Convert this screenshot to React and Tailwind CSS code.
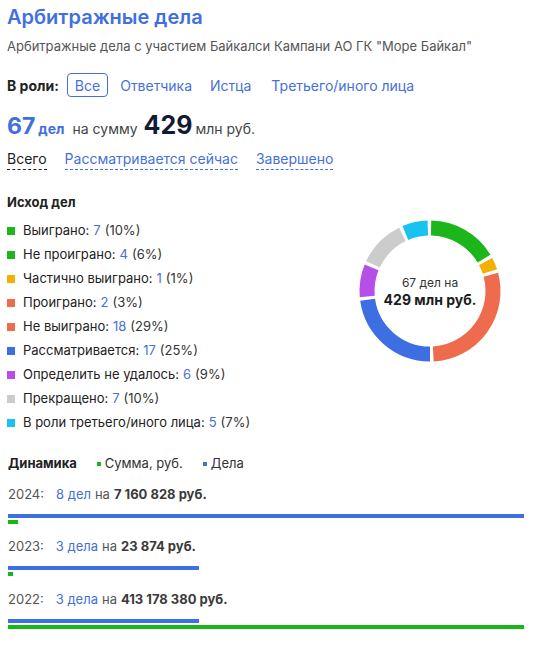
import React from 'react';

const legend = [
  { label: 'Выиграно', n: 7, p: '10%', color: 'bg-[#1cb51c]' },
  { label: 'Не проиграно', n: 4, p: '6%', color: 'bg-[#1cb51c]' },
  { label: 'Частично выиграно', n: 1, p: '1%', color: 'bg-[#f4b000]' },
  { label: 'Проиграно', n: 2, p: '3%', color: 'bg-[#ee6b4d]' },
  { label: 'Не выиграно', n: 18, p: '29%', color: 'bg-[#ee6b4d]' },
  { label: 'Рассматривается', n: 17, p: '25%', color: 'bg-[#3d6fe3]' },
  { label: 'Определить не удалось', n: 6, p: '9%', color: 'bg-[#b64fe8]' },
  { label: 'Прекращено', n: 7, p: '10%', color: 'bg-[#cccccc]' },
  { label: 'В роли третьего/иного лица', n: 5, p: '7%', color: 'bg-[#19c3ef]' },
];

const arcs = [
  { from: 1, to: 59, color: '#1cb51c' },
  { from: 62, to: 72, color: '#f4b000' },
  { from: 75, to: 177, color: '#ee6b4d' },
  { from: 180, to: 262, color: '#3d6fe3' },
  { from: 265, to: 292, color: '#b64fe8' },
  { from: 295, to: 334, color: '#cccccc' },
  { from: 337, to: 358, color: '#19c3ef' },
];

const pt = (cx, cy, r, deg) => {
  const a = ((deg - 90) * Math.PI) / 180;
  return [cx + r * Math.cos(a), cy + r * Math.sin(a)];
};

const arcPath = (from, to) => {
  const [x1, y1] = pt(75, 75, 63, from);
  const [x2, y2] = pt(75, 75, 63, to);
  const large = to - from > 180 ? 1 : 0;
  return `M ${x1} ${y1} A 63 63 0 ${large} 1 ${x2} ${y2}`;
};

const Donut = () => (
  <div className="relative mt-[24px] mr-[25px] h-[150px] w-[150px]">
    <svg width="150" height="150" viewBox="0 0 150 150">
      {arcs.map((a, i) => (
        <path key={i} d={arcPath(a.from, a.to)} fill="none" stroke={a.color} strokeWidth="15" />
      ))}
    </svg>
    <div className="absolute inset-0 flex flex-col items-center justify-center pt-[2px]">
      <div className="text-[12px] leading-[16px] text-[#333]">67 дел на</div>
      <div className="text-[14px] leading-[18px] font-bold text-[#1d1d1d]">429 млн руб.</div>
    </div>
  </div>
);

const YearRow = ({ year, cases, sum, blue, green, mt }) => (
  <div className={mt}>
    <div className="flex h-[20px] items-center text-[13px] text-[#555]">
      <span>{year}:</span>
      <span className="ml-[12px] text-[#4670d8]">{cases}</span>
      <span className="ml-[4px]">на</span>
      <span className="ml-[4px] font-bold text-[#3a3a3a]">{sum}</span>
    </div>
    <div className="mt-[9px] h-[4px] bg-[#3d6fe3]" style={{ width: blue }} />
    <div className="mt-[2px] h-[4px] bg-[#16b816]" style={{ width: green }} />
  </div>
);

const App = () => {
  return (
    <div className="w-[537px] h-[646px] bg-white px-[7px] pt-[3px] font-['Inter','Noto_Sans',sans-serif] text-[#222]">
      <h1 className="h-[28px] text-[20px] leading-[28px] font-semibold text-[#3f6fe0]">Арбитражные дела</h1>
      <div className="mt-[5px] h-[20px] text-[13px] leading-[20px] text-[#555]">
        Арбитражные дела с участием Байкалси Кампани АО ГК "Море Байкал"
      </div>

      <div className="mt-[17px] flex h-[24px] items-center text-[14px]">
        <span className="font-bold text-[#222]">В роли:</span>
        <span className="ml-[8px] flex h-[24px] items-center rounded-[4px] border border-[#3f6fe0] px-[7px] text-[#3f6fe0]">Все</span>
        <span className="ml-[12px] text-[#4670d8]">Ответчика</span>
        <span className="ml-[18px] text-[#4670d8]">Истца</span>
        <span className="ml-[20px] text-[#4670d8]">Третьего/иного лица</span>
      </div>

      <div className="mt-[10px] flex h-[32px] items-baseline">
        <span className="text-[23px] font-bold text-[#3f6fe0]">67</span>
        <span className="ml-[3px] text-[14px] font-bold text-[#3f6fe0]">дел</span>
        <span className="ml-[8px] text-[14px] text-[#444]">на сумму</span>
        <span className="ml-[6px] text-[25px] font-bold text-[#141a33]">429</span>
        <span className="ml-[3px] text-[14px] text-[#444]">млн руб.</span>
      </div>

      <div className="mt-[10px] flex h-[22px] items-start text-[14px]">
        <span className="border-b border-dashed border-[#222] leading-[20px] text-[#222]">Всего</span>
        <span className="ml-[18px] border-b border-dashed border-[#4670d8] leading-[20px] text-[#4670d8]">Рассматривается сейчас</span>
        <span className="ml-[18px] border-b border-dashed border-[#4670d8] leading-[20px] text-[#4670d8]">Завершено</span>
      </div>

      <div className="mt-[21px] flex justify-between">
        <div>
          <div className="h-[20px] text-[13px] leading-[20px] font-bold text-[#222]">Исход дел</div>
          <div className="mt-[7px]">
            {legend.map((l) => (
              <div key={l.label} className="flex h-[24px] items-center text-[13px]">
                <span className={`h-[8px] w-[8px] ${l.color}`} />
                <span className="ml-[8px] text-[#222]">{l.label}:</span>
                <span className="ml-[4px] text-[#4670d8]">{l.n}</span>
                <span className="ml-[4px] text-[#333]">({l.p})</span>
              </div>
            ))}
          </div>
        </div>
        <Donut />
      </div>

      <div className="mt-[19px] flex h-[20px] items-center pl-[1px] text-[13px]">
        <span className="font-bold text-[#222]">Динамика</span>
        <span className="ml-[20px] h-[4px] w-[4px] bg-[#16b816]" />
        <span className="ml-[4px] text-[#333]">Сумма, руб.</span>
        <span className="ml-[20px] h-[4px] w-[4px] bg-[#3d6fe3]" />
        <span className="ml-[4px] text-[#333]">Дела</span>
      </div>

      <div className="pl-[1px]">
        <YearRow mt="mt-[11px]" year="2024" cases="8 дел" sum="7 160 828 руб." blue="516px" green="10px" />
        <YearRow mt="mt-[13px]" year="2023" cases="3 дела" sum="23 874 руб." blue="191px" green="5px" />
        <YearRow mt="mt-[14px]" year="2022" cases="3 дела" sum="413 178 380 руб." blue="191px" green="516px" />
      </div>
    </div>
  );
};

export default App;
